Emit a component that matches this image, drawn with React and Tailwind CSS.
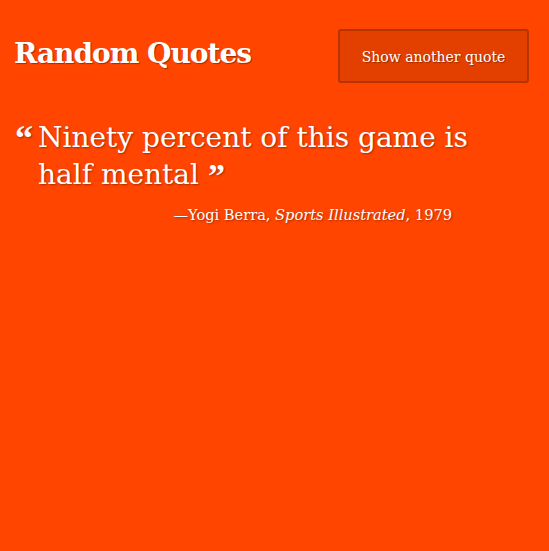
import React from "react";

function App() {
  return (
    <div
      className="w-full min-h-[551px] bg-[#ff4500] text-white px-[14px] pt-[28px]"
      style={{ fontFamily: '"DejaVu Serif", "Liberation Serif", serif' }}
    >
      <div className="flex justify-between items-start">
        <h1 className="text-[28px] font-bold tracking-[-1px] leading-[54px] mt-[-1px] [text-shadow:1px_1px_1px_rgba(0,0,0,0.35)]">
          Random Quotes
        </h1>
        <button className="w-[191px] h-[54px] mr-[6px] mt-[1px] bg-[#e34000] border-2 border-[#b83300] rounded-[3px] text-[14px] pt-[2px] [text-shadow:1px_1px_1px_rgba(0,0,0,0.35)]">
          Show another quote
        </button>
      </div>

      <div className="mt-[36px] w-[455px] [text-shadow:1px_1px_2px_rgba(0,0,0,0.35)]">
        <p className="relative pl-[24px] text-[28px] leading-[37px]">
          <span className="absolute left-[1px] top-[1px] text-[36px] leading-[37px] font-bold font-['Liberation_Serif']">“</span>
          Ninety percent of this game is half mental{" "}
          <span className="inline-block align-top text-[34px] leading-[37px] font-bold font-['Liberation_Serif'] mt-[1px]">”</span>
        </p>
        <p className="mt-[10px] text-[14.6px] text-right pr-[17px]">
          —Yogi Berra, <em className="font-normal">Sports Illustrated</em>, 1979
        </p>
      </div>
    </div>
  );
}

export default App;
